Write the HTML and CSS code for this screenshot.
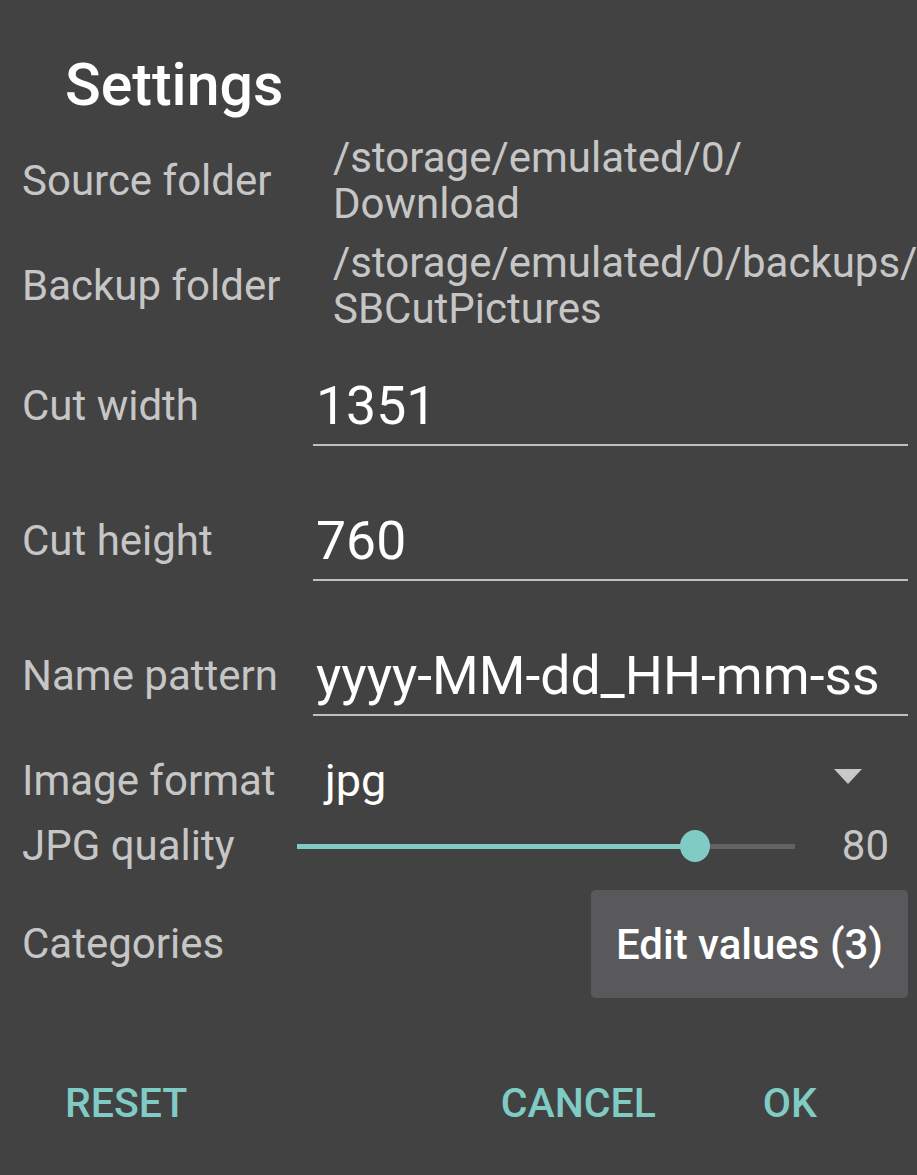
FILE: index.html
```html
<!DOCTYPE html>
<html>
<head>
<meta charset="utf-8">
<link rel="stylesheet" href="styles.css">
</head>
<body>
<div class="dialog">
  <h1 class="title">Settings</h1>
  <div class="row folder-row first">
    <div class="label">Source folder</div>
    <div class="folder">/storage/emulated/0/<br>Download</div>
  </div>
  <div class="row folder-row">
    <div class="label">Backup folder</div>
    <div class="folder">/storage/emulated/0/backups/<br>SBCutPictures</div>
  </div>
  <div class="row edit-row first-edit">
    <div class="label tall">Cut width</div>
    <div class="edit">1351</div>
  </div>
  <div class="row edit-row">
    <div class="label tall">Cut height</div>
    <div class="edit">760</div>
  </div>
  <div class="row edit-row last-edit">
    <div class="label tall">Name pattern</div>
    <div class="edit">yyyy-MM-dd_HH-mm-ss</div>
  </div>
  <div class="row spinner-row">
    <div class="label tall">Image format</div>
    <div class="spinner">
      <span class="spinner-text">jpg</span>
      <svg class="caret" width="28" height="16" viewBox="0 0 28 16"><polygon points="0,0 28,0 14,15" fill="#c8c8c8"/></svg>
    </div>
  </div>
  <div class="row slider-row">
    <div class="label">JPG quality</div>
    <div class="slider">
      <div class="track"><div class="fill" style="width:80%"></div><div class="thumb" style="left:80%"></div></div>
      <span class="slider-value">80</span>
    </div>
  </div>
  <div class="row cat-row">
    <div class="label">Categories</div>
    <button class="edit-btn">Edit values (3)</button>
  </div>
  <div class="actions">
    <span class="action">RESET</span>
    <span class="spacer"></span>
    <span class="action">CANCEL</span>
    <span class="action ok">OK</span>
  </div>
</div>
</body>
</html>
```

FILE: styles.css
```css
html, body {
  margin: 0;
  padding: 0;
  background: #424242;
}
body {
  width: 917px;
  height: 1175px;
  overflow: hidden;
  font-family: Roboto, "Noto Sans", sans-serif;
}
.dialog {
  padding: 0 9px 0 22px;
}
.title {
  margin: 0 0 17px 0;
  padding: 52px 0 0 43px;
  font-size: 59px;
  line-height: 66px;
  font-weight: 500;
  color: #ffffff;
  height: 66px;
}
.row {
  display: flex;
}
.label {
  width: 291px;
  flex: none;
  font-size: 42px;
  line-height: 46px;
  color: #c6c6c6;
  white-space: nowrap;
}
.label.tall {
  line-height: 60px;
}
.folder-row {
  align-items: center;
  margin-top: 13px;
}
.folder-row.first {
  margin-top: 0;
}
.folder {
  padding-left: 20px;
  font-size: 42px;
  line-height: 46px;
  color: #c6c6c6;
  white-space: nowrap;
}
.edit-row {
  margin-top: 65px;
}
.edit-row.first-edit {
  margin-top: 44px;
}
.edit {
  flex: 1;
  font-size: 53.5px;
  line-height: 60px;
  color: #ffffff;
  padding: 0 0 8px 3px;
  border-bottom: 2px solid #c0c0c0;
  white-space: nowrap;
}
.spinner-row {
  margin-top: 35px;
}
.spinner {
  flex: 1;
  display: flex;
  align-items: center;
  justify-content: space-between;
  padding: 0 46px 0 12px;
  height: 60px;
}
.spinner-text {
  font-size: 45px;
  line-height: 60px;
  color: #ffffff;
}
.caret {
  margin-top: -8px;
}
.slider-row {
  margin-top: 12px;
  align-items: center;
}
.slider {
  flex: 1;
  display: flex;
  align-items: center;
  margin-left: -16px;
}
.track {
  position: relative;
  width: 498px;
  height: 5px;
  background: #626262;
}
.fill {
  height: 5px;
  background: #80cbc4;
}
.thumb {
  position: absolute;
  top: 50%;
  width: 30px;
  height: 32px;
  border-radius: 50%;
  background: #80cbc4;
  transform: translate(-50%, -50%);
}
.slider-value {
  margin-left: auto;
  padding-right: 19px;
  font-size: 42px;
  line-height: 46px;
  color: #c6c6c6;
}
.cat-row {
  margin-top: 21px;
  align-items: center;
  justify-content: space-between;
}
.edit-btn {
  width: 317px;
  height: 108px;
  border: none;
  border-radius: 5px;
  background: #59595b;
  color: #ffffff;
  font-family: Roboto, "Noto Sans", sans-serif;
  font-size: 42px;
  font-weight: 500;
  padding: 0;
}
.actions {
  display: flex;
  align-items: center;
  margin-top: 80px;
  padding-left: 43px;
}
.action {
  font-size: 41px;
  line-height: 50px;
  font-weight: 500;
  color: #80cbc4;
}
.spacer {
  flex: 1;
}
.ok {
  margin-left: 107px;
  margin-right: 91px;
}
```
